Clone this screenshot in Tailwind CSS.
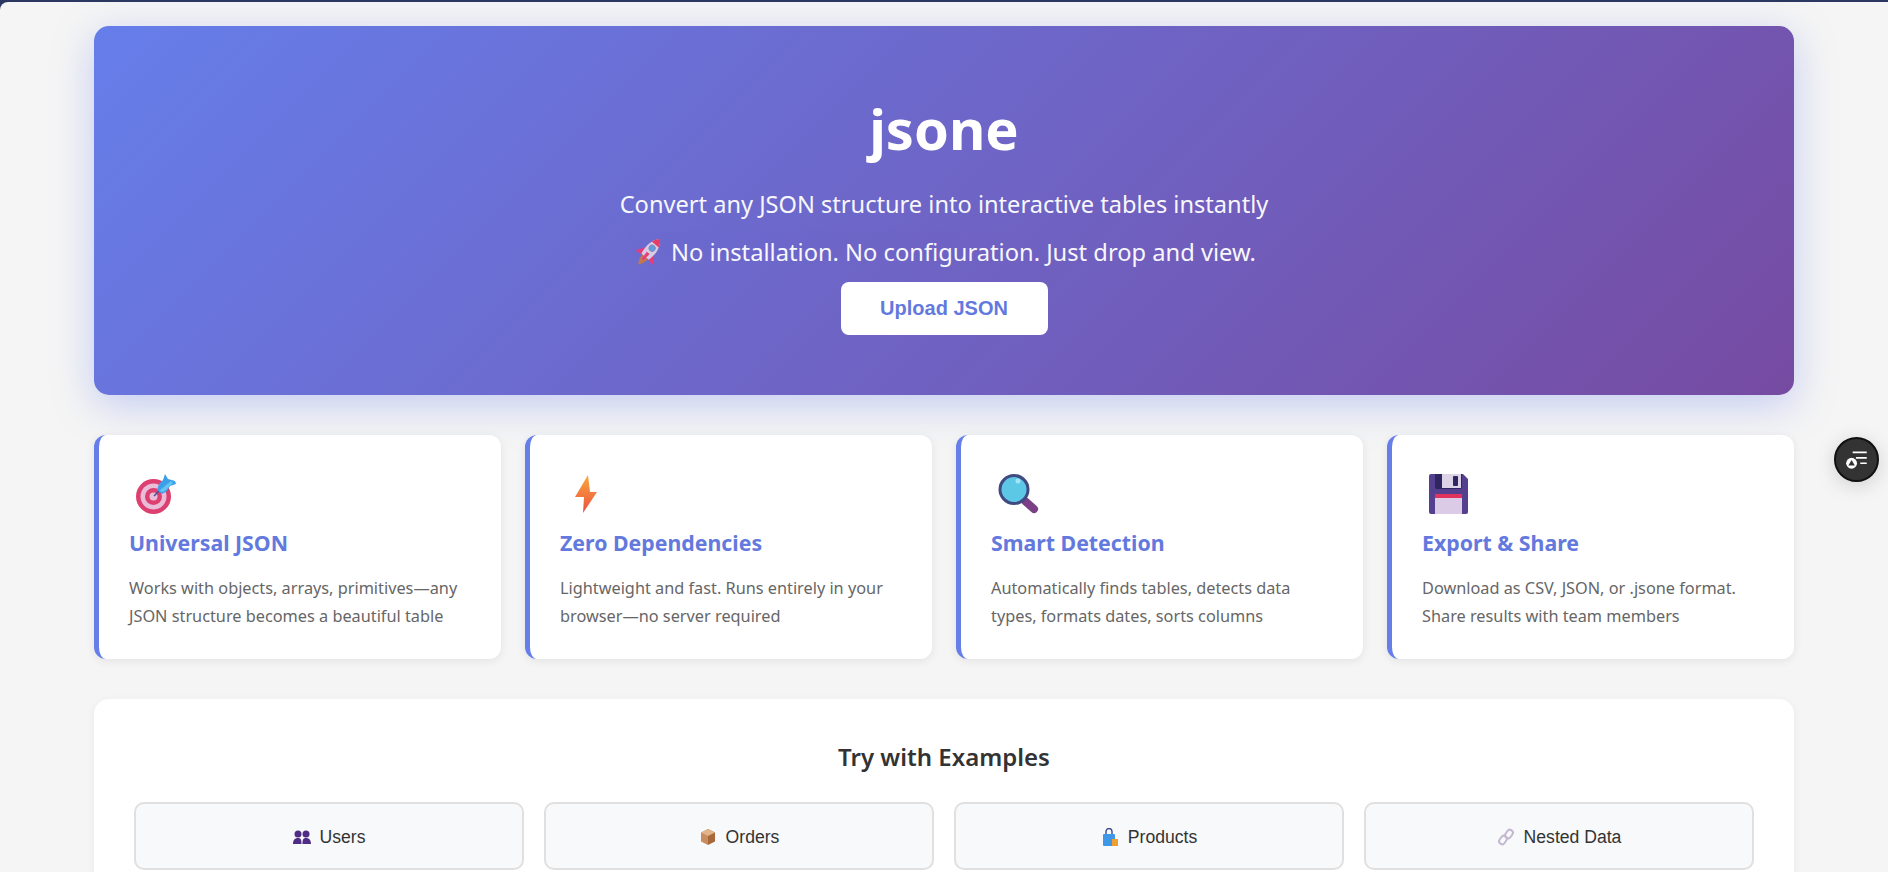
<!DOCTYPE html>
<html lang="en">
<head>
  <meta charset="UTF-8" />
  <meta name="viewport" content="width=device-width, initial-scale=1.0"/>
  <title>jsone</title>
  <script src="https://cdn.jsdelivr.net/npm/@tailwindcss/browser@4"></script>
</head>
<body class="h-screen overflow-hidden bg-[#2a3760] pt-[2px] font-['Noto_Sans',sans-serif]">
  <div class="relative h-full overflow-hidden rounded-tl-lg bg-[#f5f5f5] px-[94px] pt-[24px]">

    <!-- Hero -->
    <section class="h-[369px] rounded-[15px] bg-linear-[135deg,#667eea_0%,#764ba2_100%] pt-[64px] text-center text-white shadow-[0_10px_40px_rgba(102,126,234,0.35)]">
      <h1 class="text-[56px] leading-[76px] font-bold">jsone</h1>
      <p class="mt-[21px] text-[23.6px] leading-[34px] opacity-95">Convert any JSON structure into interactive tables instantly</p>
      <p class="mt-[14px] flex items-center justify-center text-[23.7px] leading-[34px] opacity-95">
        <svg class="mr-[5px] h-[34px] w-[34px]" viewBox="0 0 28 28">
          <g transform="rotate(40 14 14)">
            <path d="M10 12 4.500 20 10 19.500zM18 12l5.500 8-5.500-.5z" fill="#ef3a72"/>
            <path d="M11 19h6c0 4-1.500 7-3 8.500-1.500-1.500-3-4.500-3-8.500z" fill="#c8784a"/>
            <path d="M14 0c5 5 5.500 12 4 19h-8C8.500 12 9 5 14 0z" fill="#ddd3e6"/>
            <path d="M14 0c2 2 3.200 4 3.800 6h-7.600C10.800 4 12 2 14 0z" fill="#ef3a5f"/>
            <circle cx="14" cy="10" r="2.500" fill="#5aa5e0" stroke="#8f86c0" stroke-width=".8"/>
            <path d="M12.500 15h3l-.5 7h-2z" fill="#ef3a72"/>
          </g>
        </svg>
        No installation. No configuration. Just drop and view.
      </p>
      <button class="mt-[13px] h-[53px] w-[207px] rounded-lg bg-white pb-[1px] font-['Liberation_Sans',sans-serif] text-[20px] font-bold text-[#6379dd]">Upload JSON</button>
    </section>

    <!-- Features -->
    <section class="mt-[40px] grid grid-cols-4 gap-6">
      <div class="h-[224px] rounded-xl border-l-[5px] border-[#667eea] bg-white pt-[35px] pr-[30px] pl-[30px] shadow-[0_2px_10px_rgba(0,0,0,0.08)]">
        <svg class="h-[48px] w-[48px]" viewBox="0 0 48 48">
          <circle cx="24.500" cy="26.500" r="17.500" fill="#dc3f70"/>
          <circle cx="24.500" cy="26.500" r="13" fill="#e9bdd8"/>
          <circle cx="24.500" cy="26.500" r="8.500" fill="#dc3f70"/>
          <circle cx="24.500" cy="26.500" r="4" fill="#e9bdd8"/>
          <path d="M25 26 32 19" stroke="#3d4f8f" stroke-width="1.500"/>
          <path d="M36 4l3 5 7 2 1 3-6 2-3 5-5 3-5-4 2-6 4-4z" fill="#3c9fe8"/>
          <path d="M30 21 42 11l2 2-7 7-3 2z" fill="#66c4f2"/>
        </svg>
        <h3 class="mt-[10px] text-[21.3px] leading-[30px] font-bold text-[#6379dd]">Universal JSON</h3>
        <p class="mt-[16px] text-[16.3px] leading-[28px] text-[#666666]">Works with objects, arrays, primitives—any JSON structure becomes a beautiful table</p>
      </div>
      <div class="h-[224px] rounded-xl border-l-[5px] border-[#667eea] bg-white pt-[35px] pr-[30px] pl-[30px] shadow-[0_2px_10px_rgba(0,0,0,0.08)]">
        <svg class="h-[48px] w-[48px]" viewBox="0 0 48 48">
          <defs><linearGradient id="bolt" x1="0" y1="0" x2="0" y2="1"><stop offset="0" stop-color="#f9a83c"/><stop offset="1" stop-color="#ea5040"/></linearGradient></defs>
          <path d="M28 5 15 27h9l-1 16 14-21h-7z" fill="url(#bolt)"/>
        </svg>
        <h3 class="mt-[10px] text-[21.3px] leading-[30px] font-bold text-[#6379dd]">Zero Dependencies</h3>
        <p class="mt-[16px] text-[16.3px] leading-[28px] text-[#666666]">Lightweight and fast. Runs entirely in your browser—no server required</p>
      </div>
      <div class="h-[224px] rounded-xl border-l-[5px] border-[#667eea] bg-white pt-[35px] pr-[30px] pl-[30px] shadow-[0_2px_10px_rgba(0,0,0,0.08)]">
        <svg class="h-[48px] w-[48px]" viewBox="0 0 48 48">
          <path d="M34 31 43 39" stroke="#7b3f86" stroke-width="8" stroke-linecap="round"/>
          <circle cx="23" cy="19.500" r="14" fill="#5cc8e6" stroke="#3f4a80" stroke-width="3"/>
          <circle cx="27" cy="11" r="2.500" fill="#a5e4f4"/>
        </svg>
        <h3 class="mt-[10px] text-[21.3px] leading-[30px] font-bold text-[#6379dd]">Smart Detection</h3>
        <p class="mt-[16px] text-[16.3px] leading-[28px] text-[#666666]">Automatically finds tables, detects data types, formats dates, sorts columns</p>
      </div>
      <div class="h-[224px] rounded-xl border-l-[5px] border-[#667eea] bg-white pt-[35px] pr-[30px] pl-[30px] shadow-[0_2px_10px_rgba(0,0,0,0.08)]">
        <svg class="h-[48px] w-[48px]" viewBox="0 0 48 48">
          <path d="M9 4h32l5 5v33a2 2 0 0 1-2 2H9a2 2 0 0 1-2-2V6a2 2 0 0 1 2-2z" fill="#54408f"/>
          <path d="M13 4h27v13a2 2 0 0 1-2 2H15a2 2 0 0 1-2-2z" fill="#2f2560"/>
          <rect x="20" y="4" width="19" height="14" fill="#dcd3e6"/>
          <rect x="31" y="6" width="5" height="10" rx="1" fill="#2f2560"/>
          <rect x="13" y="24" width="27" height="20" fill="#dccbe6"/>
          <rect x="13" y="24" width="27" height="4" fill="#e0345c"/>
        </svg>
        <h3 class="mt-[10px] text-[21.3px] leading-[30px] font-bold text-[#6379dd]">Export &amp; Share</h3>
        <p class="mt-[16px] text-[16.3px] leading-[28px] text-[#666666]">Download as CSV, JSON, or .jsone format. Share results with team members</p>
      </div>
    </section>

    <!-- Examples -->
    <section class="mt-[40px] rounded-[15px] bg-white p-[40px] shadow-[0_2px_10px_rgba(0,0,0,0.05)]">
      <h2 class="text-center text-[24px] leading-[36px] font-semibold text-[#333333]">Try with Examples</h2>
      <div class="mt-[27px] grid grid-cols-4 gap-5 font-['Liberation_Sans',sans-serif] text-[17.6px] text-[#333333]">
        <button class="flex h-[68px] items-center justify-center gap-[9px] rounded-[10px] border-2 border-[#e0e0e0] bg-[#f8f9fa] pt-[2px]">
          <svg class="h-[18px] w-[18px]" viewBox="0 0 18 18" fill="#4f2d86">
            <circle cx="5" cy="6" r="3.500"/><circle cx="13" cy="6" r="3.500"/>
            <path d="M0 16c0-4 2-6 5-6s3.500 2 3.500 6zM9.500 16c0-4 .5-6 3.500-6s5 2 5 6z"/>
          </svg>
          Users
        </button>
        <button class="flex h-[68px] items-center justify-center gap-[9px] rounded-[10px] border-2 border-[#e0e0e0] bg-[#f8f9fa] pt-[2px]">
          <svg class="h-[18px] w-[18px]" viewBox="0 0 18 18">
            <path d="M9 1 2 4.500v9L9 17z" fill="#c98d5f"/>
            <path d="M9 1l7 3.500v9L9 17z" fill="#a8683c"/>
            <path d="M2 4.500 9 8l7-3.500L9 1z" fill="#e2b48c"/>
          </svg>
          Orders
        </button>
        <button class="flex h-[68px] items-center justify-center gap-[9px] rounded-[10px] border-2 border-[#e0e0e0] bg-[#f8f9fa] pt-[2px]">
          <svg class="h-[18px] w-[18px]" viewBox="0 0 18 18">
            <path d="M5 6V3.500a3 3 0 0 1 6 0V6" fill="none" stroke="#3a4a8f" stroke-width="1.400"/>
            <rect x="2" y="6" width="12" height="12" rx="1" fill="#3f97e8"/>
            <path d="M11 11h6v7h-6z" fill="#f0a030"/>
          </svg>
          Products
        </button>
        <button class="flex h-[68px] items-center justify-center gap-[9px] rounded-[10px] border-2 border-[#e0e0e0] bg-[#f8f9fa] pt-[2px]">
          <svg class="h-[18px] w-[18px]" viewBox="0 0 18 18" fill="none" stroke="#c4b8d0" stroke-width="2">
            <rect x="9" y="1.500" width="6" height="9" rx="3" transform="rotate(35 12 6)"/>
            <rect x="3" y="7.500" width="6" height="9" rx="3" transform="rotate(35 6 12)"/>
          </svg>
          Nested Data
        </button>
      </div>
    </section>

    <!-- Floating button -->
    <button class="absolute top-[435px] right-[9px] flex h-[45px] w-[45px] items-center justify-center rounded-full border-2 border-[#111111] bg-[#333333] shadow-[0_4px_20px_rgba(0,0,0,0.15)]">
      <svg class="h-[26px] w-[26px]" viewBox="0 0 24 24">
        <path d="M8 5h13M11 10h10M15 15h6" stroke="#ffffff" stroke-width="1.500"/>
        <circle cx="7" cy="15" r="5" fill="#ffffff"/>
        <path d="M7 12l3 5H4z" fill="#333333"/>
      </svg>
    </button>
  </div>
</body>
</html>
